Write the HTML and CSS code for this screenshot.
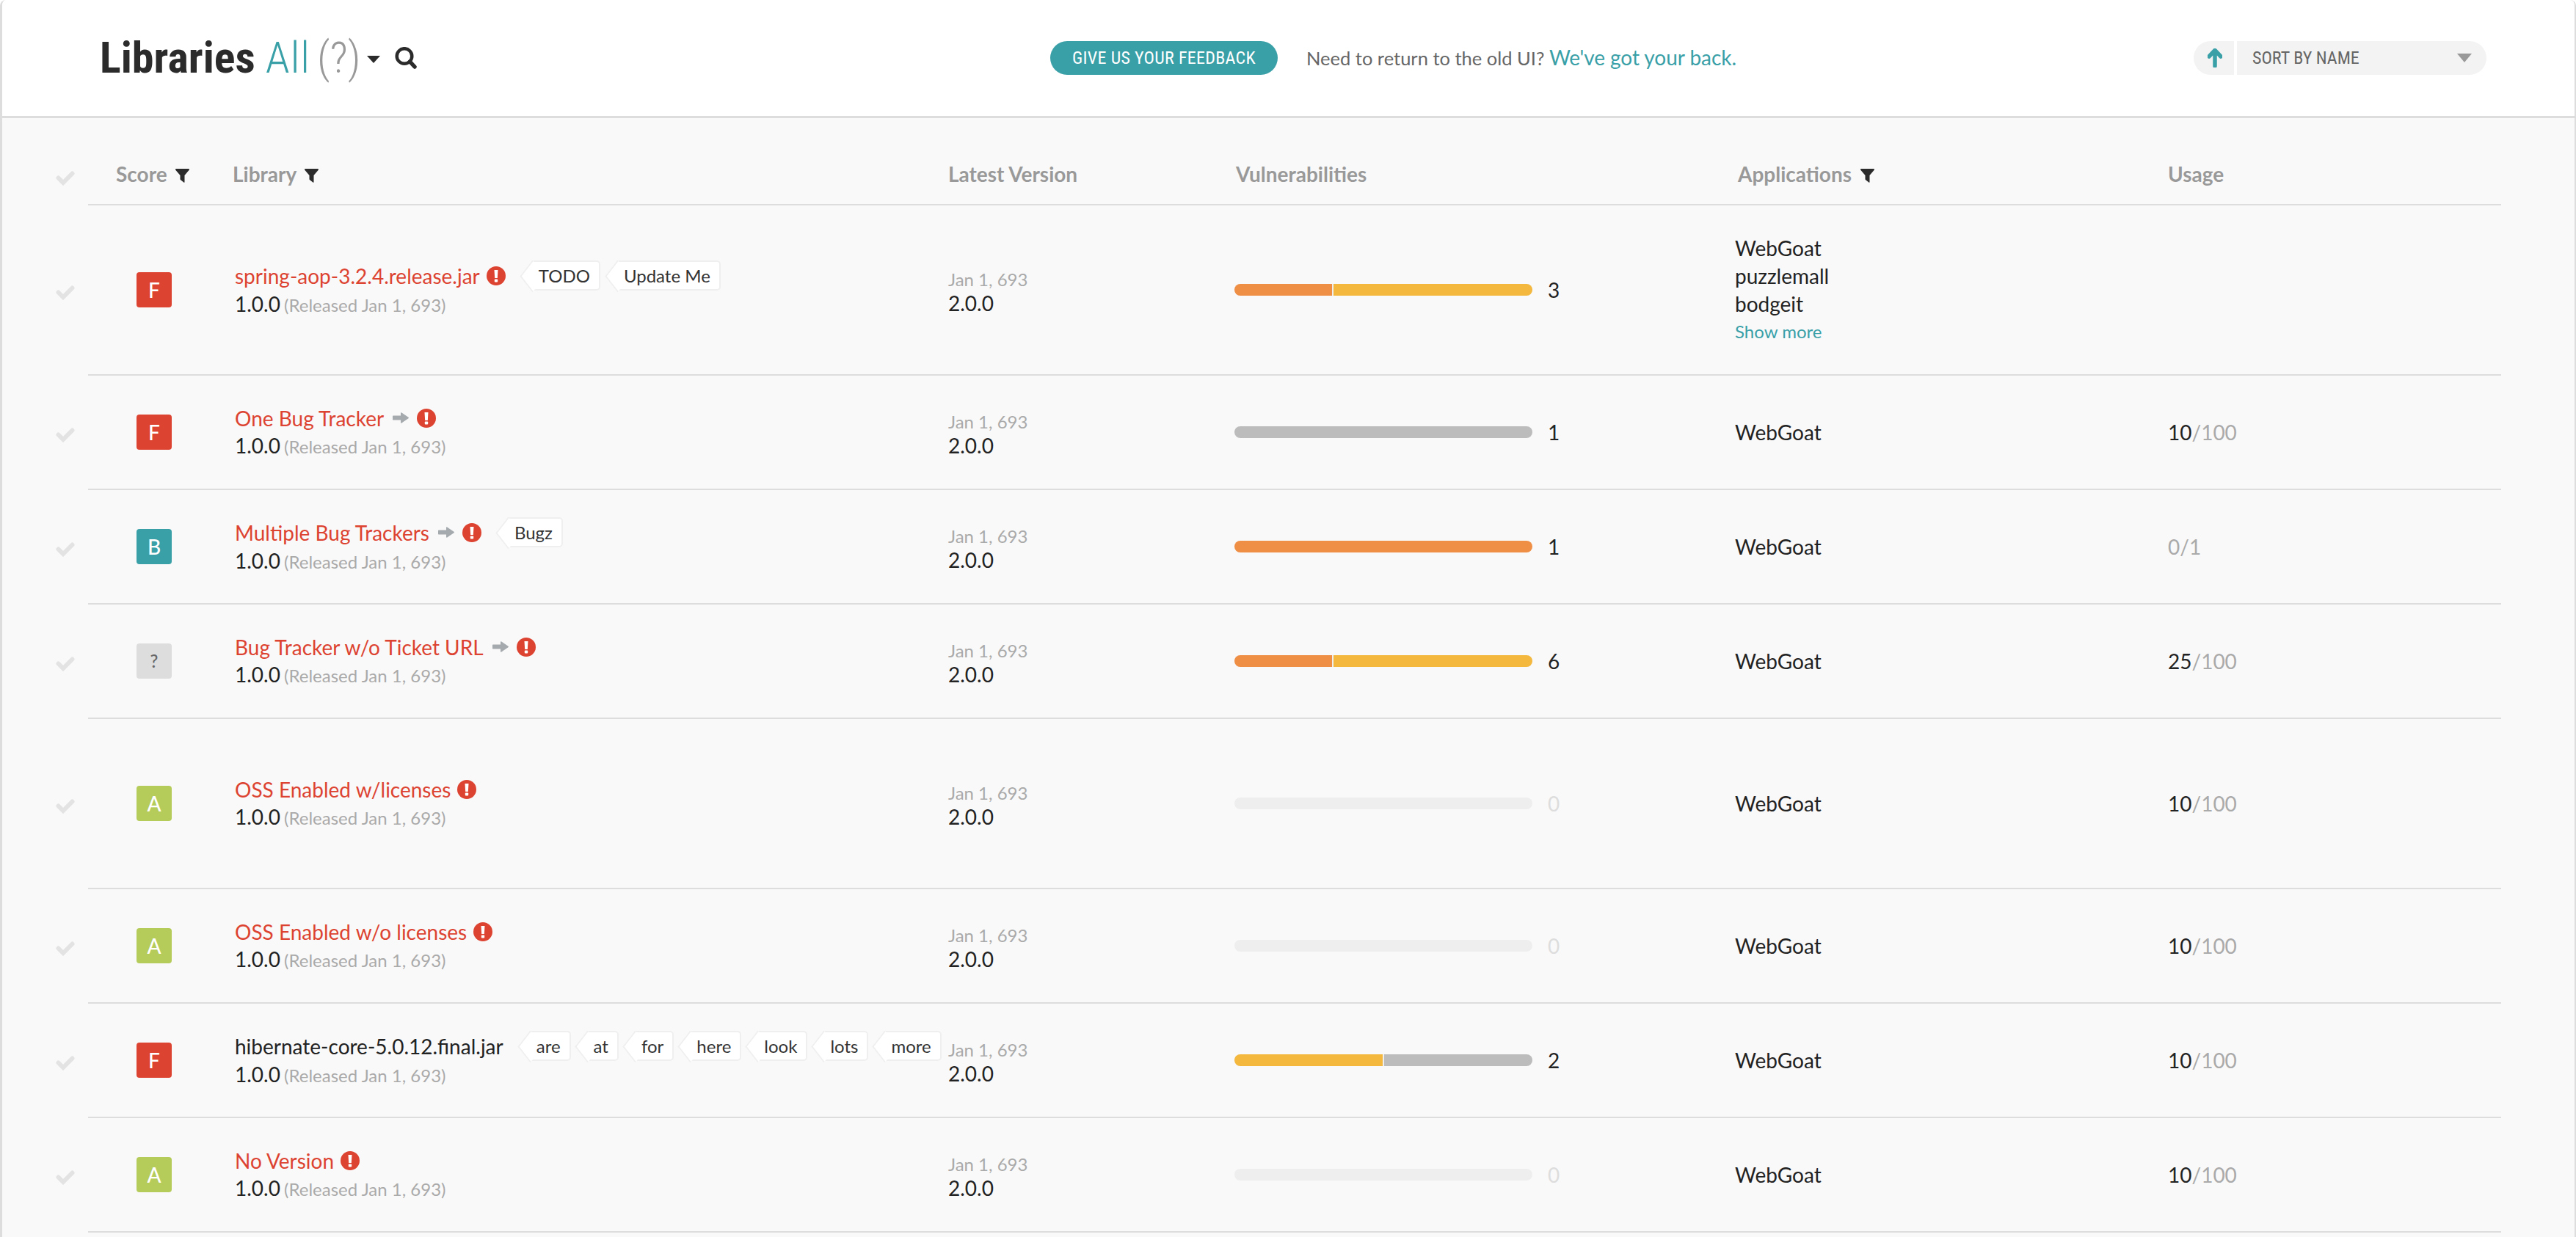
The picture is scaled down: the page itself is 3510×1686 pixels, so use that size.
FILE: index.html
```html
<!DOCTYPE html>
<html lang="en">
<head>
  <meta charset="UTF-8">
  <title>Libraries</title>
  <link rel="stylesheet" href="styles.css">
</head>
<body>

  <svg class="sprites" width="0" height="0">
    <symbol id="i-check" viewBox="0 0 26 20"><path d="M3.5 9.5 10 16 22.5 3.5" fill="none" stroke="currentColor" stroke-width="6" stroke-linecap="round" stroke-linejoin="miter"/></symbol>
    <symbol id="i-filter" viewBox="0 0 19 19"><path d="M1 0H18C19 0 19.300 1 18.700 1.800L12.500 9V18.200C12.500 19 11.800 19 11.300 18.600L7.500 15.500C6.900 15 6.500 14.800 6.500 14V9L.3 1.800C-.3 1 0 0 1 0Z" fill="currentColor"/></symbol>
    <symbol id="i-error" viewBox="0 0 26 26"><circle cx="13" cy="13" r="13" fill="#dd4331"/><path d="M10.500 5H15.500L14.800 16H11.200Z" fill="#fff"/><rect x="10.800" y="17.500" width="4.400" height="4" rx="1" fill="#fff"/></symbol>
    <symbol id="i-arrow" viewBox="0 0 22 15"><path d="M1 4.500H11V1C11 .2 11.700 0 12.300 .4L21.500 6.700C22.100 7.200 22.100 7.800 21.500 8.300L12.300 14.600C11.700 15 11 14.800 11 14V10.500H1C.4 10.500 0 10.100 0 9.500V5.500C0 4.900 .4 4.500 1 4.500Z" fill="currentColor"/></symbol>
  </svg>

  <div class="page">
    <header class="topbar">
      <div class="title-block">
        <h1 class="title">Libraries</h1>
        <span class="title-filter">All</span>
        <span class="title-help">(?)</span>
        <span class="title-caret"></span>
        <svg class="search-icon" width="30" height="30" viewBox="0 0 30 30"><circle cx="13" cy="12.500" r="10.300" fill="none" stroke="#2b2b2b" stroke-width="4.500"/><path d="M20.500 20 27 27" stroke="#2b2b2b" stroke-width="5.500" stroke-linecap="round"/></svg>
      </div>
      <a class="feedback-btn">GIVE US YOUR FEEDBACK</a>
      <p class="old-ui">Need to return to the old UI? <a>We've got your back.</a></p>
      <div class="sort">
        <span class="sort-dir"><svg width="20" height="26" viewBox="0 0 20 26"><path d="M10 24V3M2 11 10 2.500 18 11" fill="none" stroke="#3aa0a8" stroke-width="5.500" stroke-linejoin="round" stroke-linecap="round"/></svg></span>
        <span class="sort-select">SORT BY NAME<span class="sort-caret"></span></span>
      </div>
    </header>

    <div class="lib-head">
      <svg class="check head-check"><use href="#i-check"/></svg>
      <div class="head-cols">
        <span>Score <svg class="filter"><use href="#i-filter"/></svg></span>
        <span>Library <svg class="filter"><use href="#i-filter"/></svg></span>
        <span>Latest Version</span>
        <span>Vulnerabilities</span>
        <span>Applications <svg class="filter"><use href="#i-filter"/></svg></span>
        <span>Usage</span>
      </div>
    </div>

    <div class="lib-row tall">
      <svg class="check"><use href="#i-check"/></svg>
      <div class="cols">
        <div class="score-cell"><span class="grade grade-f">F</span></div>
        <div>
          <div class="name-line">
            <a class="lib-name">spring-aop-3.2.4.release.jar</a>
            <svg class="err"><use href="#i-error"/></svg>
            <span class="tags"><span class="tag">TODO</span><span class="tag">Update Me</span></span>
          </div>
          <div class="version-line">1.0.0 <small>(Released Jan 1, 693)</small></div>
        </div>
        <div class="latest"><small>Jan 1, 693</small><div>2.0.0</div></div>
        <div class="vuln">
          <div class="bar"><i class="orange" style="width: 33%"></i><i class="yellow" style="width: 67%"></i></div>
          <span class="count">3</span>
        </div>
        <div class="apps">
          <div>WebGoat</div>
          <div>puzzlemall</div>
          <div>bodgeit</div>
          <a class="show-more">Show more</a>
        </div>
        <div></div>
      </div>
    </div>

    <div class="lib-row">
      <svg class="check"><use href="#i-check"/></svg>
      <div class="cols">
        <div class="score-cell"><span class="grade grade-f">F</span></div>
        <div>
          <div class="name-line">
            <a class="lib-name">One Bug Tracker</a>
            <svg class="arrow"><use href="#i-arrow"/></svg>
            <svg class="err"><use href="#i-error"/></svg>
          </div>
          <div class="version-line">1.0.0 <small>(Released Jan 1, 693)</small></div>
        </div>
        <div class="latest"><small>Jan 1, 693</small><div>2.0.0</div></div>
        <div class="vuln">
          <div class="bar"><i class="gray" style="width: 100%"></i></div>
          <span class="count">1</span>
        </div>
        <div class="apps"><div>WebGoat</div></div>
        <div class="usage"><b>10</b>/100</div>
      </div>
    </div>

    <div class="lib-row">
      <svg class="check"><use href="#i-check"/></svg>
      <div class="cols">
        <div class="score-cell"><span class="grade grade-b">B</span></div>
        <div>
          <div class="name-line">
            <a class="lib-name">Multiple Bug Trackers</a>
            <svg class="arrow"><use href="#i-arrow"/></svg>
            <svg class="err"><use href="#i-error"/></svg>
            <span class="tags"><span class="tag">Bugz</span></span>
          </div>
          <div class="version-line">1.0.0 <small>(Released Jan 1, 693)</small></div>
        </div>
        <div class="latest"><small>Jan 1, 693</small><div>2.0.0</div></div>
        <div class="vuln">
          <div class="bar"><i class="orange" style="width: 100%"></i></div>
          <span class="count">1</span>
        </div>
        <div class="apps"><div>WebGoat</div></div>
        <div class="usage">0/1</div>
      </div>
    </div>

    <div class="lib-row">
      <svg class="check"><use href="#i-check"/></svg>
      <div class="cols">
        <div class="score-cell"><span class="grade grade-none">?</span></div>
        <div>
          <div class="name-line">
            <a class="lib-name">Bug Tracker w/o Ticket URL</a>
            <svg class="arrow"><use href="#i-arrow"/></svg>
            <svg class="err"><use href="#i-error"/></svg>
          </div>
          <div class="version-line">1.0.0 <small>(Released Jan 1, 693)</small></div>
        </div>
        <div class="latest"><small>Jan 1, 693</small><div>2.0.0</div></div>
        <div class="vuln">
          <div class="bar"><i class="orange" style="width: 33%"></i><i class="yellow" style="width: 67%"></i></div>
          <span class="count">6</span>
        </div>
        <div class="apps"><div>WebGoat</div></div>
        <div class="usage"><b>25</b>/100</div>
      </div>
    </div>

    <div class="lib-row tall">
      <svg class="check"><use href="#i-check"/></svg>
      <div class="cols">
        <div class="score-cell"><span class="grade grade-a">A</span></div>
        <div>
          <div class="name-line">
            <a class="lib-name">OSS Enabled w/licenses</a>
            <svg class="err"><use href="#i-error"/></svg>
          </div>
          <div class="version-line">1.0.0 <small>(Released Jan 1, 693)</small></div>
        </div>
        <div class="latest"><small>Jan 1, 693</small><div>2.0.0</div></div>
        <div class="vuln">
          <div class="bar"></div>
          <span class="count none">0</span>
        </div>
        <div class="apps"><div>WebGoat</div></div>
        <div class="usage"><b>10</b>/100</div>
      </div>
    </div>

    <div class="lib-row">
      <svg class="check"><use href="#i-check"/></svg>
      <div class="cols">
        <div class="score-cell"><span class="grade grade-a">A</span></div>
        <div>
          <div class="name-line">
            <a class="lib-name">OSS Enabled w/o licenses</a>
            <svg class="err"><use href="#i-error"/></svg>
          </div>
          <div class="version-line">1.0.0 <small>(Released Jan 1, 693)</small></div>
        </div>
        <div class="latest"><small>Jan 1, 693</small><div>2.0.0</div></div>
        <div class="vuln">
          <div class="bar"></div>
          <span class="count none">0</span>
        </div>
        <div class="apps"><div>WebGoat</div></div>
        <div class="usage"><b>10</b>/100</div>
      </div>
    </div>

    <div class="lib-row">
      <svg class="check"><use href="#i-check"/></svg>
      <div class="cols">
        <div class="score-cell"><span class="grade grade-f">F</span></div>
        <div>
          <div class="name-line">
            <a class="lib-name plain">hibernate-core-5.0.12.final.jar</a>
            <span class="tags tags-tight">
              <span class="tag">are</span><span class="tag">at</span><span class="tag">for</span><span class="tag">here</span><span class="tag">look</span><span class="tag">lots</span><span class="tag">more</span>
            </span>
          </div>
          <div class="version-line">1.0.0 <small>(Released Jan 1, 693)</small></div>
        </div>
        <div class="latest"><small>Jan 1, 693</small><div>2.0.0</div></div>
        <div class="vuln">
          <div class="bar"><i class="yellow" style="width: 50%"></i><i class="gray" style="width: 50%"></i></div>
          <span class="count">2</span>
        </div>
        <div class="apps"><div>WebGoat</div></div>
        <div class="usage"><b>10</b>/100</div>
      </div>
    </div>

    <div class="lib-row">
      <svg class="check"><use href="#i-check"/></svg>
      <div class="cols">
        <div class="score-cell"><span class="grade grade-a">A</span></div>
        <div>
          <div class="name-line">
            <a class="lib-name">No Version</a>
            <svg class="err"><use href="#i-error"/></svg>
          </div>
          <div class="version-line">1.0.0 <small>(Released Jan 1, 693)</small></div>
        </div>
        <div class="latest"><small>Jan 1, 693</small><div>2.0.0</div></div>
        <div class="vuln">
          <div class="bar"></div>
          <span class="count none">0</span>
        </div>
        <div class="apps"><div>WebGoat</div></div>
        <div class="usage"><b>10</b>/100</div>
      </div>
    </div>
  </div>

</body>
</html>
```

FILE: styles.css
```css
* {
  box-sizing: border-box;
}
html, body {
  margin: 0;
  height: 100%;
  overflow: hidden;
}
body {
  font-family: "Lato", "Liberation Sans", sans-serif;
  font-size: 28px;
  line-height: 38px;
  color: #222;
  background: #fff;
}
.sprites {
  position: absolute;
}
.page {
  height: 100vh;
  overflow: hidden;
  background: #f9f9f9;
  border-left: 3px solid #ddd;
  border-right: 2px solid #ddd;
  border-top-left-radius: 8px;
  border-top-right-radius: 8px;
}

/* Top bar */
.topbar {
  display: flex;
  align-items: center;
  height: 161px;
  padding-left: 133px;
  padding-bottom: 1px;
  background: #fff;
  border-bottom: 3px solid #ddd;
}
.title-block {
  flex: 0 0 1295px;
  display: flex;
  align-items: center;
}
.title {
  margin: 0;
  font: bold 60px/70px "Roboto Condensed", "Liberation Sans Narrow", "Roboto", sans-serif;
  color: #2b2b2b;
}
.title-filter, .title-help {
  font: 300 60px/70px "Roboto Condensed", "Liberation Sans Narrow", "Roboto", sans-serif;
}
.title-filter {
  margin-left: 14px;
  letter-spacing: 1px;
  color: #3aa0a8;
}
.title-help {
  margin-left: 9px;
  color: #999;
}
.title-caret {
  margin-left: 8px;
  border-top: 10px solid #2b2b2b;
  border-left: 9px solid transparent;
  border-right: 9px solid transparent;
  margin-top: 4px;
}
.search-icon {
  margin-left: 20px;
}
.feedback-btn {
  display: block;
  width: 310px;
  height: 46px;
  border-radius: 23px;
  background: #3aa0a8;
  color: #fff;
  font: 400 24px/46px "Roboto Condensed", "Liberation Sans Narrow", "Roboto", sans-serif;
  letter-spacing: .3px;
  text-align: center;
}
.old-ui {
  margin: 0 0 0 39px;
  font-size: 25.5px;
  color: #666;
}
.old-ui a {
  font-size: 28px;
  letter-spacing: -.05px;
  color: #3aa0a8;
}
.sort {
  display: flex;
  margin-left: auto;
  margin-right: 120px;
  height: 46px;
  gap: 4px;
  color: #666;
  font: 24px/46px "Roboto Condensed", "Liberation Sans Narrow", "Roboto", sans-serif;
}
.sort-dir {
  width: 55px;
  padding: 10px 0 0 19px;
  background: #f3f3f3;
  border-radius: 23px 0 0 23px;
}
.sort-dir svg {
  display: block;
}
.sort-select {
  display: flex;
  align-items: center;
  width: 340px;
  padding-left: 21px;
  background: #f3f3f3;
  border-radius: 0 23px 23px 0;
}
.sort-caret {
  margin-left: auto;
  margin-right: 20px;
  border-top: 12px solid #999;
  border-left: 10px solid transparent;
  border-right: 10px solid transparent;
}

/* Column heads */
.lib-head, .lib-row {
  display: flex;
  align-items: center;
}
.check {
  flex: none;
  width: 26px;
  height: 20px;
  margin-left: 73px;
  margin-right: 18px;
  margin-top: 6px;
  color: #e3e3e3;
}
.head-check {
  margin-top: 44px;
}
.head-cols {
  flex: 1;
  height: 119px;
  margin-right: 100px;
  padding-left: 38px;
  padding-top: 34px;
  display: grid;
  grid-template-columns: 159px 975px 392px 684px 586px 1fr;
  align-items: center;
  color: #999;
  font-weight: 700;
  border-bottom: 2px solid #ddd;
}
.filter {
  width: 19px;
  height: 19px;
  margin-left: 5px;
  color: #2b2b2b;
  vertical-align: -1px;
}

/* Rows */
.cols {
  flex: 1;
  min-height: 156px;
  margin-right: 100px;
  padding: 30px 0;
  display: grid;
  grid-template-columns: 200px 972px 390px 682px 590px 1fr;
  align-items: center;
  border-bottom: 2px solid #ddd;
}
.tall .cols {
  min-height: 232px;
}
.score-cell {
  padding-left: 66px;
}
.grade {
  display: block;
  width: 48px;
  height: 48px;
  border-radius: 4px;
  color: #fff;
  font-weight: 500;
  line-height: 48px;
  text-align: center;
}
.grade-f { background: #dd4331; }
.grade-b { background: #3aa0a8; }
.grade-a { background: #b5cc5b; }
.grade-none { background: #ddd; color: #666; font-size: 24px; }
.name-line {
  display: flex;
  align-items: center;
  min-height: 38px;
  margin-top: -3px;
}
.lib-name {
  color: #dd4331;
}
.lib-name.plain {
  color: #222;
}
.err {
  width: 26px;
  height: 26px;
  margin-left: 9px;
}
.arrow {
  width: 22px;
  height: 15px;
  margin-left: 12px;
  color: #a5aaae;
}
.arrow + .err {
  margin-left: 11px;
}
.version-line {
  height: 36px;
  line-height: 36px;
}
.tags {
  display: flex;
  margin-left: 19px;
}
.tag {
  position: relative;
  z-index: 0;
  height: 41px;
  margin-left: 22px;
  padding: 0 12px 0 10px;
  background: #fff;
  border: 2px solid #efefef;
  border-left: 0;
  border-radius: 0 5px 5px 0;
  color: #333;
  font-size: 24px;
  line-height: 37px;
}
.tag::before {
  content: "";
  position: absolute;
  z-index: -1;
  left: -14px;
  top: 4px;
  width: 29px;
  height: 29px;
  background: #fff;
  border-left: 2px solid #efefef;
  border-bottom: 2px solid #efefef;
  transform: scaleX(.78) rotate(45deg);
}
.tag:first-child {
  margin-left: 16px;
}
.tags-tight .tag:not(:first-child) {
  margin-left: 21px;
}
small {
  font-size: 24px;
  color: #aaa;
}
.version-line small {
  margin-left: -2px;
}
.latest {
  line-height: 33px;
  margin-top: 4px;
}
.latest small {
  display: block;
}
.vuln {
  display: flex;
  align-items: center;
}
.bar {
  display: flex;
  gap: 2px;
  width: 406px;
  height: 16px;
  border-radius: 8px;
  overflow: hidden;
  background: #eee;
}
.bar i {
  display: block;
}
.orange { background: #ef8e45; }
.yellow { background: #f3b83d; }
.gray { background: #bcbcbc; }
.count {
  margin-left: 21px;
}
.count.none {
  color: #ddd;
}
.apps > div {
  height: 38px;
}
.show-more {
  display: block;
  height: 38px;
  font-size: 24px;
  color: #3aa0a8;
}
.usage {
  color: #aaa;
}
.usage b {
  font-weight: 400;
  color: #222;
}
```
